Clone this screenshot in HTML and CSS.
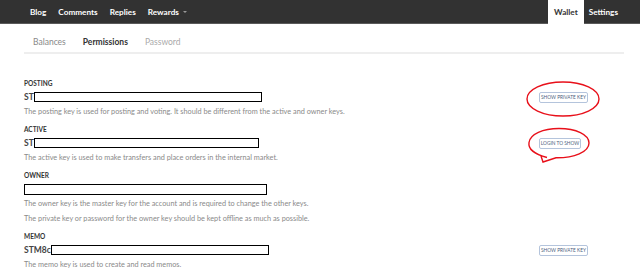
FILE: index.html
```html
<!DOCTYPE html>
<html lang="en">
<head>
    <meta charset="UTF-8">
    <meta name="viewport" content="width=device-width, initial-scale=1.0">
    <title>Wallet - Permissions</title>
    <link rel="stylesheet" href="styles.css">
</head>
<body>
    <header class="topbar">
        <nav class="topbar-left">
            <a href="#">Blog</a>
            <a href="#">Comments</a>
            <a href="#">Replies</a>
            <a href="#">Rewards <span class="caret"></span></a>
        </nav>
        <nav class="topbar-right">
            <a href="#" class="active">Wallet</a>
            <a href="#">Settings</a>
        </nav>
    </header>

    <div class="page">
        <div class="subnav">
            <a href="#" class="muted">Balances</a>
            <a href="#" class="current">Permissions</a>
            <a href="#" class="faint">Password</a>
        </div>

        <div class="keys">
            <div class="key-block">
                <div class="key-label">Posting</div>
                <div class="key-row">
                    <div class="key-value">ST<span class="redact r1"></span></div>
                    <div class="key-action"><button class="key-btn">Show private key</button></div>
                </div>
                <p class="key-desc">The posting key is used for posting and voting. It should be different from the active and owner keys.</p>
            </div>

            <div class="key-block">
                <div class="key-label">Active</div>
                <div class="key-row">
                    <div class="key-value">ST<span class="redact r2"></span></div>
                    <div class="key-action"><button class="key-btn short">Login to show</button></div>
                </div>
                <p class="key-desc">The active key is used to make transfers and place orders in the internal market.</p>
            </div>

            <div class="key-block">
                <div class="key-label">Owner</div>
                <div class="key-row">
                    <div class="key-value"><span class="redact r3"></span></div>
                </div>
                <p class="key-desc">The owner key is the master key for the account and is required to change the other keys.</p>
                <p class="key-desc">The private key or password for the owner key should be kept offline as much as possible.</p>
            </div>

            <div class="key-block">
                <div class="key-label">Memo</div>
                <div class="key-row">
                    <div class="key-value">STM8c<span class="redact r4"></span></div>
                    <div class="key-action"><button class="key-btn">Show private key</button></div>
                </div>
                <p class="key-desc">The memo key is used to create and read memos.</p>
            </div>
        </div>
    </div>

    <svg class="marks" width="640" height="271" viewBox="0 0 640 271">
        <ellipse cx="563" cy="99" rx="36" ry="17" />
        <path d="M547 157.5 C 534 154, 528 149, 529 142.5 C 530 134, 543 128.5, 559 128.5 C 576 128.5, 589 134.5, 589 143 C 589 152, 574 158, 556 157.8 L 543 162 L 541 156" />
    </svg>
</body>
</html>
```

FILE: styles.css
```css
body {
    margin: 0;
    font-family: "Lato", "Open Sans", sans-serif;
    background-color: #fff;
    color: #333;
    overflow: hidden;
}
a {
    text-decoration: none;
    color: inherit;
}
.topbar {
    display: flex;
    justify-content: space-between;
    align-items: stretch;
    height: 24px;
    background-color: #323232;
    border-bottom: 1px solid #5a5a5a;
    box-sizing: border-box;
    padding: 0 17px 0 24px;
}
.topbar-left, .topbar-right {
    display: flex;
    align-items: stretch;
}
.topbar a {
    display: flex;
    align-items: center;
    padding: 0 6px;
    font-size: 8.2px;
    font-weight: bold;
    color: #fff;
}
.topbar-right a {
    padding: 0 5px;
}
.topbar-right a.active {
    background-color: #fff;
    color: #333;
    margin-bottom: -1px;
    padding: 0 6px;
}
.caret {
    display: inline-block;
    margin-left: 4px;
    border-left: 2px solid transparent;
    border-right: 2px solid transparent;
    border-top: 2px solid #999;
}
.page {
    margin: 0 16px 0 24px;
}
.subnav {
    display: flex;
    height: 30px;
    box-sizing: border-box;
    align-items: center;
    padding-top: 7px;
    padding-left: 9px;
    border-bottom: 2px solid #eeeeee;
}
.subnav a {
    font-size: 8.5px;
    margin-right: 17px;
}
.subnav .muted {
    color: #888;
}
.subnav .current {
    color: #333;
    font-weight: bold;
}
.subnav .faint {
    color: #aaa;
}
.keys {
    padding-top: 25px;
}
.key-block {
    margin-bottom: 6px;
}
.key-label {
    font-size: 6.5px;
    font-weight: bold;
    text-transform: uppercase;
    color: #333;
    line-height: 10px;
    height: 10px;
}
.key-row {
    display: flex;
    align-items: center;
    height: 14px;
    margin-top: 1px;
}
.key-value {
    flex: 1;
    display: flex;
    align-items: center;
    font-size: 8.5px;
    font-weight: bold;
    color: #444;
}
.redact {
    display: inline-block;
    height: 8px;
    border: 1.5px solid #000;
    background-color: #fff;
}
.r1 { width: 226px; }
.r2 { width: 223px; }
.r3 { width: 241px; height: 9px; }
.r4 { width: 216px; }
.key-action {
    width: 49px;
    margin-right: 36px;
}
.key-btn {
    display: block;
    height: 11px;
    width: 49px;
    padding: 0;
    font-family: inherit;
    font-size: 4.8px;
    text-transform: uppercase;
    color: #4d5f80;
    background-color: #fff;
    border: 1px solid #b4c4dc;
    border-radius: 2px;
}
.key-btn.short {
    width: 42px;
}
.key-desc {
    margin: 0;
    font-size: 7.3px;
    line-height: 15px;
    color: #8a8a8a;
}
.marks {
    position: absolute;
    left: 0;
    top: 0;
    pointer-events: none;
}
.marks ellipse, .marks path {
    fill: none;
    stroke: #e8101a;
    stroke-width: 1.4;
}
```
